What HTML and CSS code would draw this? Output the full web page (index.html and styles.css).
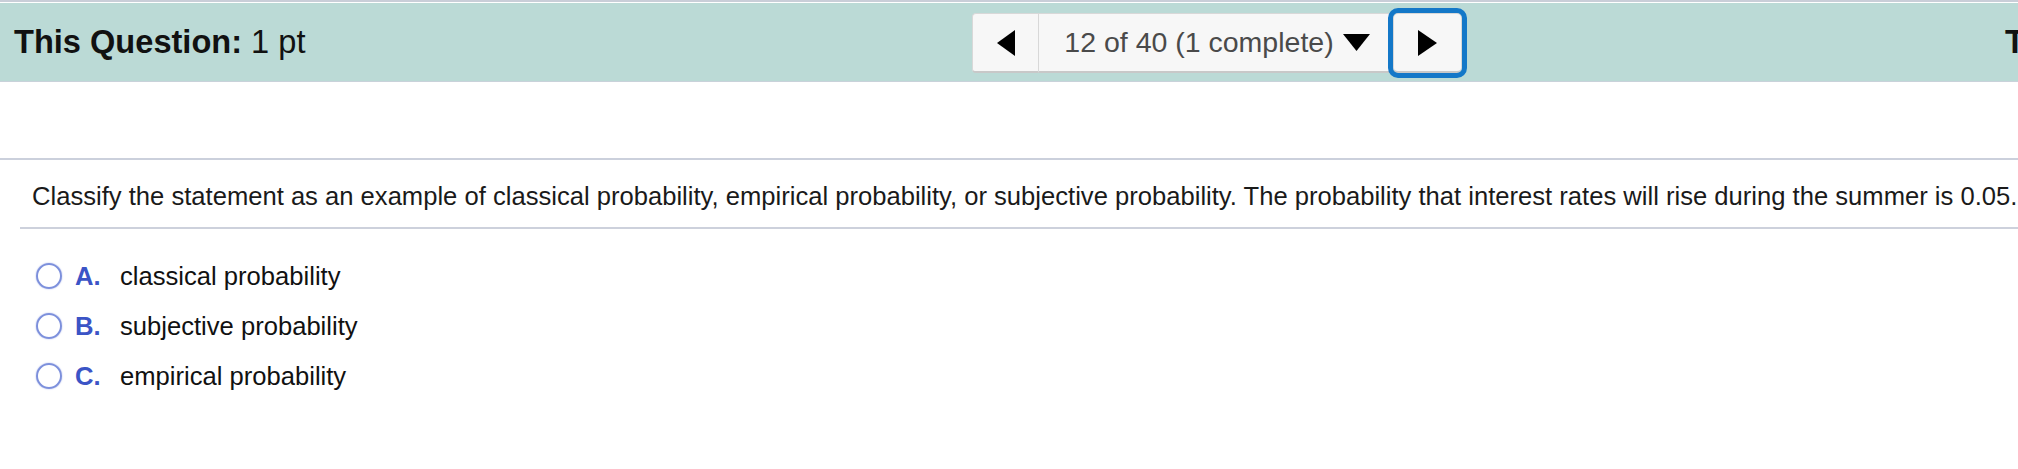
FILE: index.html
```html
<!DOCTYPE html>
<html lang="en">
<head>
    <meta charset="UTF-8">
    <meta name="viewport" content="width=device-width, initial-scale=1.0">
    <title>Question 12 of 40</title>
    <link rel="stylesheet" href="styles.css">
</head>
<body>
    <div class="page-header">
        <div class="toolbar">
            <div class="question-points"><strong>This Question:</strong> 1 pt</div>
            <div class="question-nav">
                <button class="nav-btn prev-btn" type="button" aria-label="Previous question">
                    <svg width="18" height="26" viewBox="0 0 18 26"><polygon points="18,0 18,26 0,13" fill="#000"/></svg>
                </button>
                <button class="nav-select" type="button">
                    <span>12 of 40 (1 complete)</span>
                    <svg width="27" height="17" viewBox="0 0 27 17"><polygon points="0,0 27,0 13.5,17" fill="#000"/></svg>
                </button>
                <button class="nav-btn next-btn" type="button" aria-label="Next question">
                    <svg width="19" height="26" viewBox="0 0 19 26"><polygon points="0,0 19,13 0,26" fill="#000"/></svg>
                </button>
            </div>
            <div class="test-points"><strong>This Test:</strong> 40 pts possible</div>
        </div>
    </div>

    <div class="question">
        <p class="question-text">Classify the statement as an example of classical probability, empirical probability, or subjective probability. The probability that interest rates will rise during the summer is 0.05.</p>
        <ul class="choices">
            <li class="choice">
                <span class="radio"></span>
                <span class="choice-letter">A.</span>
                <span class="choice-text">classical probability</span>
            </li>
            <li class="choice">
                <span class="radio"></span>
                <span class="choice-letter">B.</span>
                <span class="choice-text">subjective probability</span>
            </li>
            <li class="choice">
                <span class="radio"></span>
                <span class="choice-letter">C.</span>
                <span class="choice-text">empirical probability</span>
            </li>
        </ul>
    </div>
</body>
</html>
```

FILE: styles.css
```css
body {
    font-family: "Liberation Sans", Arial, sans-serif;
    background-color: #fff;
    color: #111;
    margin: 0;
    padding: 0;
    overflow: hidden;
    white-space: nowrap;
}
.page-header {
    border-top: 2px solid #c9ced8;
    padding-top: 1px;
}
.toolbar {
    display: flex;
    align-items: center;
    height: 78px;
    padding-left: 14px;
    background-color: #bbdad6;
    border-bottom: 1px solid #c9d2da;
}
.question-points,
.test-points {
    font-size: 32.6px;
    color: #111;
}
.question-points {
    flex: none;
    width: 958px;
}
.test-points {
    margin-left: 543px;
}
.question-nav {
    display: flex;
    height: 60px;
    margin-top: 2px;
}
.question-nav button {
    display: flex;
    align-items: center;
    justify-content: center;
    background-color: #f7f7f7;
    border: 1px solid #d8d8d8;
    border-bottom: 2px solid #c8c8c8;
    padding: 0;
    margin: 0;
    font-family: inherit;
    cursor: pointer;
}
.nav-btn {
    width: 67px;
}
.prev-btn {
    border-radius: 4px 0 0 4px;
    border-right-color: #d0d0d0;
}
.nav-select {
    width: 354px;
    border-left: none !important;
    border-right: none !important;
    gap: 9px;
    padding-left: 2px !important;
    font-size: 28.5px;
    color: #4a4a4a;
}
.next-btn {
    width: 69px !important;
    border-radius: 5px;
    outline: 5px solid #1478c8;
    outline-offset: 0;
    position: relative;
}
.question {
    margin-top: 76px;
    border-top: 2px solid #cbd0dc;
}
.question-text {
    margin: 0 0 0 20px;
    padding: 21px 0 16px 12px;
    font-size: 25.6px;
    line-height: 30px;
    color: #1a1a1a;
    border-bottom: 2px solid #cdd1dc;
}
.choices {
    list-style: none;
    margin: 22px 0 0 0;
    padding: 0;
}
.choice {
    display: flex;
    align-items: center;
    height: 50px;
    padding-left: 36px;
    font-size: 25.6px;
}
.radio {
    box-sizing: border-box;
    width: 26px;
    height: 26px;
    border: 2.5px solid #7d90dc;
    border-radius: 50%;
    box-shadow: 0 0 1.5px #9aa8e4;
}
.choice-letter {
    width: 45px;
    margin-left: 13px;
    font-weight: bold;
    color: #3b54c6;
}
.choice-text {
    color: #111;
}
```
